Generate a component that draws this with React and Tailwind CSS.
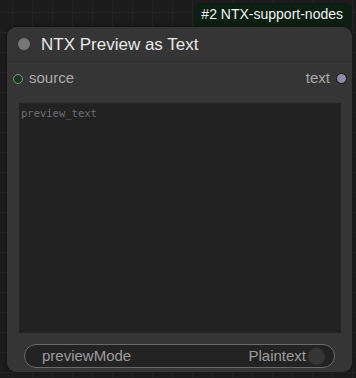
export default function App() {
  const font = { fontFamily: '"Liberation Sans", Arial, sans-serif' };
  return (
    <div
      className="w-[356px] h-[378px] overflow-hidden bg-[#1c1c1c] bg-[linear-gradient(#232323_1px,transparent_1px),linear-gradient(90deg,#232323_1px,transparent_1px)] bg-[size:20px_20px] bg-[position:12px_12px] flex flex-col items-end"
      style={font}
    >
      <div className="mt-[3px] mr-[4px] h-[23px] pl-[7px] pr-[9px] rounded-t-[6px] bg-[#0d1f12] text-[#f0f0f0] text-[14px] leading-[23px]">
        #2 NTX-support-nodes
      </div>
      <div className="self-start ml-[7px] mt-[1px] w-[345px] h-[345px] rounded-[9px] bg-[#353535] flex flex-col shadow-[0_0_4px_rgba(0,0,0,0.5)]">
        <div className="h-[35px] flex items-center border-b border-[#2e2e2e]">
          <div className="ml-[11px] w-[12px] h-[12px] rounded-full bg-[#777]" />
          <div className="ml-[11px] text-[17px] text-[#e8e8e8] leading-none">NTX Preview as Text</div>
        </div>
        <div className="h-[31px] flex items-center mt-[1px]">
          <div className="ml-[6px] w-[10px] h-[10px] rounded-full bg-[#1f3324] border-[1.5px] border-[#6f9c74]" />
          <div className="ml-[6px] text-[15px] text-[#a9a9a9]">source</div>
          <div className="ml-auto text-[15px] text-[#a9a9a9]">text</div>
          <div className="ml-[6px] mr-[5px] w-[11px] h-[11px] rounded-full bg-[#8e8aa6] border-[1.5px] border-[#111]" />
        </div>
        <div className="ml-[12px] mt-[9px] w-[322px] h-[230px] bg-[#222] px-[2px] pt-[3px] text-[10.5px] text-[#6e6e6e] leading-[14px]" style={{ fontFamily: '"DejaVu Sans Mono", "Liberation Mono", monospace' }}>
          preview_text
        </div>
        <div className="ml-[17px] mt-[11px] w-[311px] h-[24px] rounded-full border border-[#6a6a6a] bg-[#232323] flex items-center">
          <div className="ml-[17px] text-[15px] text-[#9c9c9c]">previewMode</div>
          <div className="ml-auto text-[15px] text-[#9c9c9c]">Plaintext</div>
          <div className="ml-[2px] mr-[9px] w-[17px] h-[17px] rounded-full bg-[#363636]" />
        </div>
      </div>
    </div>
  );
}
